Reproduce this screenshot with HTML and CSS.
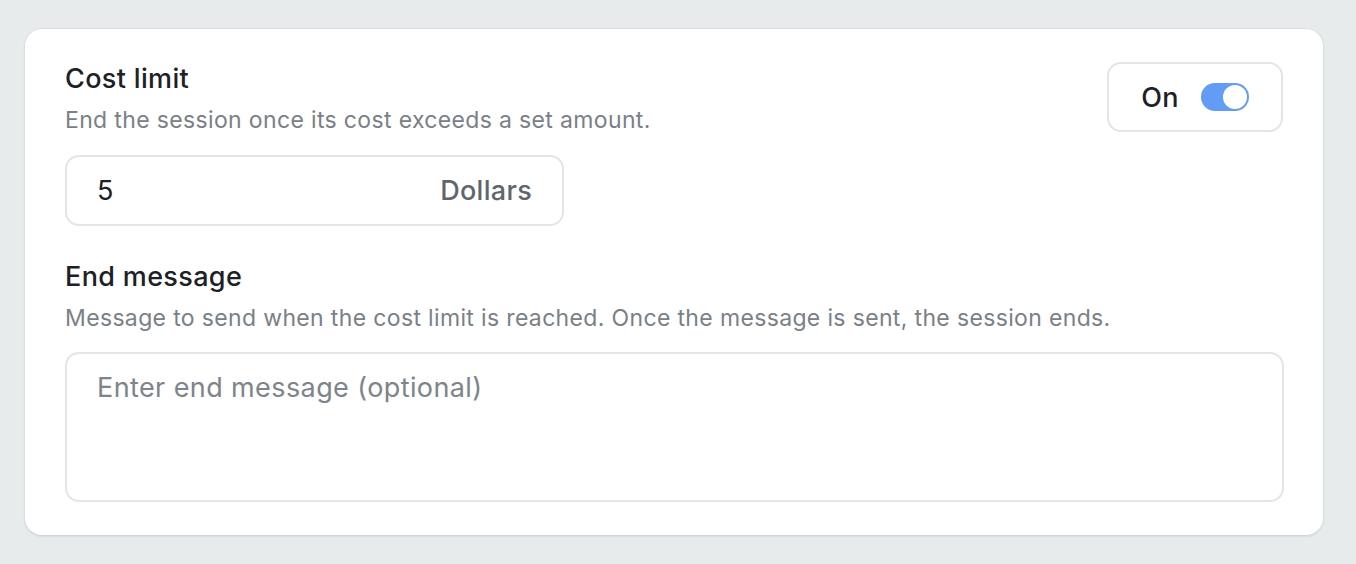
FILE: index.html
```html
<!DOCTYPE html>
<html lang="en">
<head>
<meta charset="utf-8">
<title>Cost limit</title>
<link rel="stylesheet" href="styles.css">
</head>
<body>
<main class="page">
  <section class="card">
    <div class="header-row">
      <div class="header-text">
        <h2 class="title">Cost limit</h2>
        <p class="desc">End the session once its cost exceeds a set amount.</p>
      </div>
      <div class="toggle-box">
        <span class="toggle-label">On</span>
        <span class="switch"><span class="knob"></span></span>
      </div>
    </div>
    <div class="amount-input">
      <span class="amount-value">5</span>
      <span class="amount-unit">Dollars</span>
    </div>
    <h2 class="title title-second">End message</h2>
    <p class="desc">Message to send when the cost limit is reached. Once the message is sent, the session ends.</p>
    <div class="textarea">
      <span class="placeholder">Enter end message (optional)</span>
    </div>
  </section>
</main>
</body>
</html>
```
FILE: styles.css
```css
* { box-sizing: border-box; }
html, body { margin: 0; padding: 0; }
body {
  background: #e8ebec;
  font-family: "Inter", "Liberation Sans", sans-serif;
  color: #1d2125;
}
.page {
  padding: 28px 32px 28px 24px;
}
.card {
  width: 1300px;
  height: 508px;
  background: #ffffff;
  border: 1px solid #dcdfe1;
  border-bottom-color: #d3d6d8;
  border-radius: 18px;
  box-shadow: 0 1px 2px rgba(0,0,0,0.06);
  padding: 33px 40px 33px 40px;
  display: flex;
  flex-direction: column;
}
.header-row {
  display: flex;
  justify-content: space-between;
  align-items: flex-start;
}
.title {
  margin: 0;
  font-size: 27px;
  line-height: 33px;
  letter-spacing: 0.35px;
  font-weight: 500;
  color: #1d2125;
}
.desc {
  margin: 10px 0 0 0;
  font-size: 23px;
  line-height: 30px;
  letter-spacing: 0.35px;
  font-weight: 400;
  color: #7a8087;
}
.toggle-box {
  width: 176px;
  height: 70px;
  border: 2px solid #e4e5e6;
  border-radius: 14px;
  display: flex;
  align-items: center;
  justify-content: center;
  gap: 22px;
}
.toggle-label {
  font-size: 27px;
  letter-spacing: 0.3px;
  font-weight: 500;
  color: #1d2125;
}
.switch {
  width: 48px;
  height: 28px;
  border-radius: 14px;
  background: #639cf4;
  display: flex;
  align-items: center;
  justify-content: flex-end;
  padding-right: 2px;
}
.knob {
  width: 24px;
  height: 24px;
  border-radius: 50%;
  background: #ffffff;
}
.amount-input {
  margin-top: 20px;
  width: 499px;
  height: 71px;
  border: 2px solid #e4e5e6;
  border-radius: 14px;
  display: flex;
  align-items: center;
  justify-content: space-between;
  padding: 0 30px 0 30px;
  font-size: 27px;
  letter-spacing: 0.3px;
}
.amount-value { color: #1d2125; }
.amount-unit { color: #5f656c; font-weight: 500; }
.title-second { margin-top: 34px; }
.textarea {
  margin-top: 19px;
  width: 1219px;
  height: 150px;
  border: 2px solid #e4e5e6;
  border-radius: 14px;
  padding: 17px 30px;
  font-size: 27px;
  line-height: 34px;
  letter-spacing: 0.4px;
}
.placeholder { color: #7d848b; }
```
